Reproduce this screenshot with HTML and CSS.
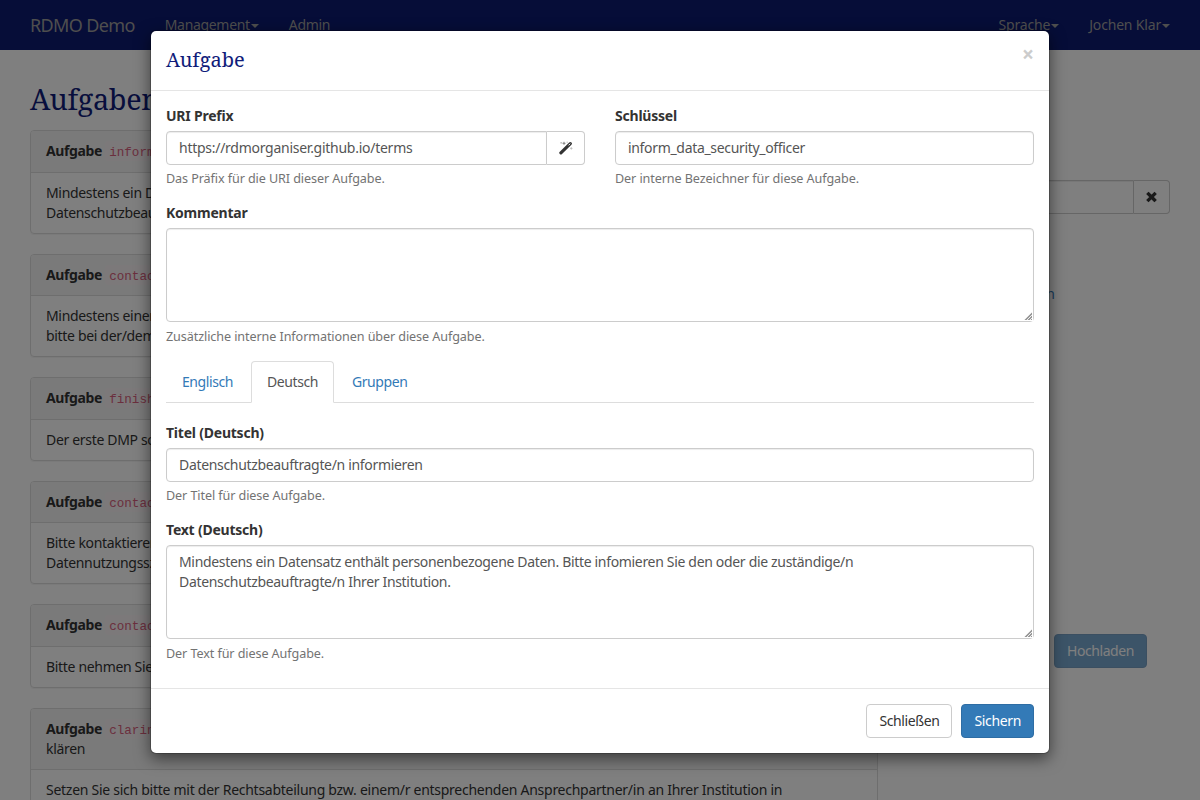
FILE: index.html
```html
<!DOCTYPE html>
<html lang="de">
<head>
<meta charset="utf-8">
<title>RDMO Demo</title>
<link rel="stylesheet" href="styles.css">
</head>
<body>
<nav class="navbar">
  <a class="brand">RDMO Demo</a>
  <a class="nav-link nav-first">Management<span class="caret"></span></a>
  <a class="nav-link">Admin</a>
  <div class="nav-right">
    <a class="nav-link">Sprache<span class="caret"></span></a>
    <a class="nav-link">Jochen Klar<span class="caret"></span></a>
  </div>
</nav>
<div class="page">
  <main class="main">
    <h1 class="page-title">Aufgaben</h1>
    <section class="panel">
      <div class="panel-heading"><strong>Aufgabe</strong> <code>inform</code></div>
      <div class="panel-body">Mindestens ein Da<br>Datenschutzbeauf</div>
    </section>
    <section class="panel">
      <div class="panel-heading"><strong>Aufgabe</strong> <code>contact</code></div>
      <div class="panel-body">Mindestens einer<br>bitte bei der/dem</div>
    </section>
    <section class="panel">
      <div class="panel-heading"><strong>Aufgabe</strong> <code>finish</code></div>
      <div class="panel-body">Der erste DMP soll</div>
    </section>
    <section class="panel">
      <div class="panel-heading"><strong>Aufgabe</strong> <code>contact</code></div>
      <div class="panel-body">Bitte kontaktieren<br>Datennutzungssze</div>
    </section>
    <section class="panel">
      <div class="panel-heading"><strong>Aufgabe</strong> <code>contact</code></div>
      <div class="panel-body">Bitte nehmen Sie</div>
    </section>
    <section class="panel">
      <div class="panel-heading"><strong>Aufgabe</strong> <code>clarin</code><br>klären</div>
      <div class="panel-body panel-wide">Setzen Sie sich bitte mit der Rechtsabteilung bzw. einem/r entsprechenden Ansprechpartner/in an Ihrer Institution in</div>
    </section>
  </main>
  <aside class="sidebar">
    <div class="input-group">
      <div class="input"></div>
      <span class="addon">
        <svg width="12" height="12" viewBox="0 0 12 12"><path d="M2.5 3L8.5 9M8.5 3L2.5 9" stroke="#333" stroke-width="3.3" stroke-linecap="square"/></svg>
      </span>
    </div>
    <a class="side-link">hinzufügen</a>
    <div class="upload"><span class="btn btn-primary btn-disabled">Hochladen</span></div>
  </aside>
</div>
<div class="backdrop">
  <div class="modal">
    <header class="modal-header">
      <h2 class="modal-title">Aufgabe</h2>
      <span class="close">×</span>
    </header>
    <div class="modal-body">
      <div class="row">
        <div class="field">
          <label class="label">URI Prefix</label>
          <div class="input-group">
            <div class="input input-uri">https://rdmorganiser.github.io/terms</div>
            <span class="addon addon-wand">
              <svg width="14" height="14" viewBox="0 0 14 14"><path d="M1.9 11.8L11.3 2.6" stroke="#333" stroke-width="3.2" stroke-linecap="round"/><path d="M9.5 4.4L11.2 2.7" stroke="#fff" stroke-width="1"/><path d="M5 .8v3M3.5 2.3h3" stroke="#777" stroke-width=".9"/><path d="M12.3 6.2v2.4M11.1 7.4h2.4M2.2 1v1.6M1.4 1.8h1.6M8.2 .6v1.4" stroke="#bbb" stroke-width=".9"/></svg>
            </span>
          </div>
          <p class="help">Das Präfix für die URI dieser Aufgabe.</p>
        </div>
        <div class="field">
          <label class="label">Schlüssel</label>
          <div class="input">inform_data_security_officer</div>
          <p class="help">Der interne Bezeichner für diese Aufgabe.</p>
        </div>
      </div>
      <div class="field">
        <label class="label">Kommentar</label>
        <textarea class="input area"></textarea>
        <p class="help">Zusätzliche interne Informationen über diese Aufgabe.</p>
      </div>
      <div class="tabs">
        <a class="tab">Englisch</a>
        <a class="tab tab-active">Deutsch</a>
        <a class="tab">Gruppen</a>
      </div>
      <div class="field">
        <label class="label">Titel (Deutsch)</label>
        <div class="input">Datenschutzbeauftragte/n informieren</div>
        <p class="help">Der Titel für diese Aufgabe.</p>
      </div>
      <div class="field">
        <label class="label">Text (Deutsch)</label>
        <textarea class="input area">Mindestens ein Datensatz enthält personenbezogene Daten. Bitte infomieren Sie den oder die zuständige/n
Datenschutzbeauftragte/n Ihrer Institution.</textarea>
        <p class="help">Der Text für diese Aufgabe.</p>
      </div>
    </div>
    <footer class="modal-footer">
      <span class="btn">Schließen</span>
      <span class="btn btn-primary">Sichern</span>
    </footer>
  </div>
</div>
</body>
</html>
```
FILE: styles.css
```css
* { box-sizing: border-box; }
body {
  margin: 0;
  height: 800px;
  overflow: hidden;
  background: #fff;
  color: #333;
  font: 14px/20px "Droid Sans", "Noto Sans", sans-serif;
  letter-spacing: -.325px;
}
.navbar {
  display: flex;
  height: 50px;
  padding: 0 15px;
  background: #0d1a70;
}
.brand { padding: 15px; font-size: 18px; letter-spacing: -.63px; color: #9d9d9d; }
.nav-link { padding: 15px; color: #9d9d9d; white-space: nowrap; }
.nav-right { display: flex; margin-left: auto; letter-spacing: -.18px; }
.caret {
  display: inline-block;
  margin-left: 1px;
  border-top: 4px solid;
  border-left: 4px solid transparent;
  border-right: 4px solid transparent;
  vertical-align: middle;
}
.page { display: flex; gap: 30px; height: 750px; padding: 0 30px; overflow: hidden; }
.main { width: 848px; }
.page-title {
  margin: 32px 0 15.3px;
  font: 28.8px/33px "Droid Serif", "Noto Serif", "DejaVu Serif Condensed", "DejaVu Serif", serif;
  letter-spacing: -.3px;
  color: #101c7a;
}
.panel {
  margin-bottom: 20px;
  border: 1px solid #ddd;
  border-radius: 4px;
  box-shadow: 0 1px 1px rgba(0, 0, 0, .05);
}
.panel-heading {
  padding: 10px 15px 10.5px;
  background: #f5f5f5;
  border-bottom: 1px solid #ddd;
  border-radius: 3px 3px 0 0;
}
.panel-heading strong { letter-spacing: -.4px; }
.panel-body { padding: 10px 15px; }
.panel-wide { letter-spacing: -.268px; }
code {
  display: inline-block;
  height: 20px;
  padding: 3px 4px 0;
  line-height: 18px;
  vertical-align: top;
  font-family: "Liberation Mono", monospace;
  font-size: 12.6px;
  letter-spacing: 0;
  color: #d65f7d;
  background: #f9f2f4;
  border-radius: 4px;
}
.sidebar { flex: 1; padding-top: 130px; }
.input-group { display: flex; }
.input-group .input { flex: 1; border-radius: 4px 0 0 4px; }
.input {
  display: block;
  width: 100%;
  height: 34px;
  padding: 6px 12px;
  font: inherit;
  letter-spacing: inherit;
  color: #555;
  background: #fff;
  border: 1px solid #ccc;
  border-radius: 4px;
  box-shadow: inset 0 1px 1px rgba(0, 0, 0, .075);
}
.input-uri { letter-spacing: -.265px; }
.area { height: 94px; margin-bottom: 5px; resize: vertical; }
.area::-webkit-resizer {
  background:
    linear-gradient(#fff, #fff) right / 1px 100% no-repeat,
    linear-gradient(#fff, #fff) bottom / 100% 1px no-repeat,
    linear-gradient(135deg, #fff 64%, transparent 64%),
    repeating-linear-gradient(135deg, #999 0 1px, #eee 1px 2.12px);
}
.addon {
  display: flex;
  align-items: center;
  justify-content: center;
  width: 36px;
  border: 1px solid #ccc;
  border-left: 0;
  border-radius: 0 4px 4px 0;
}
.addon-wand { width: 38px; }
.side-link { display: block; width: 146.5px; margin-top: 70px; text-align: right; color: #337ab7; white-space: nowrap; }
.upload { margin: 330px 23px 0 0; text-align: right; }
.btn {
  display: inline-block;
  height: 34px;
  padding: 6px 12px;
  border: 1px solid #ccc;
  border-radius: 4px;
  letter-spacing: -.4px;
}
.btn-primary { color: #fff; background: #337ab7; border-color: #2e6da4; letter-spacing: -.35px; }
.btn-disabled { opacity: .65; letter-spacing: -.42px; }
.backdrop {
  position: absolute;
  inset: 0;
  padding-top: 30px;
  background: rgba(0, 0, 0, .5);
}
.modal {
  width: 900px;
  height: 724px;
  margin: 0 auto;
  background: #fff;
  background-clip: padding-box;
  border: 1px solid rgba(0, 0, 0, .2);
  border-radius: 6px;
  box-shadow: 0 5px 15px rgba(0, 0, 0, .5);
}
.modal-header {
  display: flex;
  justify-content: space-between;
  height: 60px;
  padding: 15px;
  border-bottom: 1px solid #e5e5e5;
}
.modal-title {
  margin: 0;
  font: 20px/28px "Droid Serif", "Noto Serif", "DejaVu Serif Condensed", "DejaVu Serif", serif;
  letter-spacing: -.02px;
  color: #101c7a;
}
.close { font-size: 21px; line-height: 17px; font-weight: 700; letter-spacing: 0; color: #ccc; }
.modal-body { height: 597px; padding: 15px; }
.row { display: grid; grid-template-columns: 1fr 1fr; gap: 30px; }
.field { margin-bottom: 15px; }
.label { display: block; height: 25px; font-weight: 700; letter-spacing: -.22px; }
.help { margin: 4px 0 0; height: 19px; line-height: 20px; font-size: 12.6px; letter-spacing: -.09px; color: #737373; }
.tabs { display: flex; gap: 2px; height: 42px; margin-bottom: 20px; border-bottom: 1px solid #ddd; letter-spacing: -.42px; }
.tab { height: 42px; padding: 10px 15px; border: 1px solid transparent; color: #337ab7; }
.tab-active { color: #555; background: #fff; border-color: #ddd #ddd #fff; border-radius: 4px 4px 0 0; }
.modal-footer {
  display: flex;
  justify-content: flex-end;
  gap: 9px;
  padding: 15px;
  border-top: 1px solid #e5e5e5;
}
```
